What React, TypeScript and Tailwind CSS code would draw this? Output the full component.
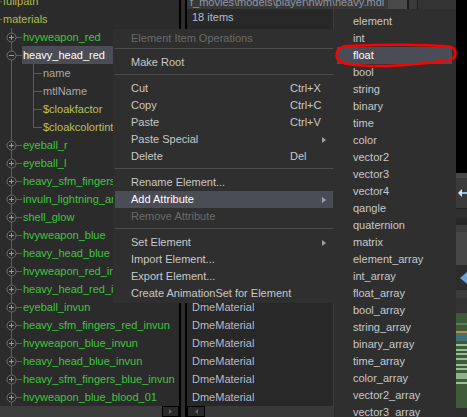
import React from 'react';

type Row = { t: string; lvl: 0 | 1 | 2; c: string; icon?: 'plus' | 'minus'; sel?: boolean; last?: boolean };

const G = 'text-[#3fc63f]';
const O = 'text-[#b3bd47]';
const Y = 'text-[#bcc255]';
const N = 'text-[#a9a9a9]';

const rows: Row[] = [
  { t: 'fullpath', lvl: 0, c: O },
  { t: 'materials', lvl: 0, c: O },
  { t: 'hvyweapon_red', lvl: 1, c: G, icon: 'plus' },
  { t: 'heavy_head_red', lvl: 1, c: 'text-white', icon: 'minus', sel: true },
  { t: 'name', lvl: 2, c: N },
  { t: 'mtlName', lvl: 2, c: N },
  { t: '$cloakfactor', lvl: 2, c: Y },
  { t: '$cloakcolortint', lvl: 2, c: Y, last: true },
  { t: 'eyeball_r', lvl: 1, c: G, icon: 'plus' },
  { t: 'eyeball_l', lvl: 1, c: G, icon: 'plus' },
  { t: 'heavy_sfm_fingers_red', lvl: 1, c: G, icon: 'plus' },
  { t: 'invuln_lightning_armor', lvl: 1, c: G, icon: 'plus' },
  { t: 'shell_glow', lvl: 1, c: G, icon: 'plus' },
  { t: 'hvyweapon_blue', lvl: 1, c: G, icon: 'plus' },
  { t: 'heavy_head_blue', lvl: 1, c: G, icon: 'plus' },
  { t: 'hvyweapon_red_invun', lvl: 1, c: G, icon: 'plus' },
  { t: 'heavy_head_red_invun', lvl: 1, c: G, icon: 'plus' },
  { t: 'eyeball_invun', lvl: 1, c: G, icon: 'plus' },
  { t: 'heavy_sfm_fingers_red_invun', lvl: 1, c: G, icon: 'plus' },
  { t: 'hvyweapon_blue_invun', lvl: 1, c: G, icon: 'plus' },
  { t: 'heavy_head_blue_invun', lvl: 1, c: G, icon: 'plus' },
  { t: 'heavy_sfm_fingers_blue_invun', lvl: 1, c: G, icon: 'plus' },
  { t: 'hvyweapon_blue_blood_01', lvl: 1, c: G, icon: 'plus' },
];

const LINE = '#5c5c5c';

function Connector({ r }: { r: Row }) {
  if (r.lvl === 0) {
    return (
      <svg width="2" height="18" className="shrink-0">
        <line x1="0" y1="9.5" x2="2" y2="9.5" stroke={LINE} />
      </svg>
    );
  }
  if (r.lvl === 1) {
    return (
      <svg width="22" height="18" className="shrink-0">
        <line x1="11.5" y1="0" x2="11.5" y2="18" stroke={LINE} />
        <line x1="16" y1="9.5" x2="22" y2="9.5" stroke={LINE} />
        <circle cx="11.5" cy="9.5" r="4.5" fill="#2b2b2b" stroke="#707070" />
        <line x1="9" y1="9.5" x2="14" y2="9.5" stroke="#9a9a9a" />
        {r.icon === 'plus' && <line x1="11.5" y1="7" x2="11.5" y2="12" stroke="#9a9a9a" />}
      </svg>
    );
  }
  return (
    <svg width="42" height="18" className="shrink-0">
      <line x1="11.5" y1="0" x2="11.5" y2="18" stroke={LINE} />
      <line x1="33.5" y1="0" x2="33.5" y2={r.last ? 9.5 : 18} stroke={LINE} />
      <line x1="33.5" y1="9.5" x2="42" y2="9.5" stroke={LINE} />
    </svg>
  );
}

type MI = { t: string; k?: string; sub?: boolean; dis?: boolean; hl?: boolean; head?: boolean } | 'sep' | 'sep1';

const menu: MI[] = [
  { t: 'Element Item Operations', dis: true, head: true },
  'sep1',
  { t: 'Make Root' },
  'sep',
  { t: 'Cut', k: 'Ctrl+X' },
  { t: 'Copy', k: 'Ctrl+C' },
  { t: 'Paste', k: 'Ctrl+V' },
  { t: 'Paste Special', sub: true },
  { t: 'Delete', k: 'Del' },
  'sep',
  { t: 'Rename Element...' },
  { t: 'Add Attribute', sub: true, hl: true },
  { t: 'Remove Attribute', dis: true },
  'sep',
  { t: 'Set Element', sub: true },
  { t: 'Import Element...' },
  { t: 'Export Element...' },
  { t: 'Create AnimationSet for Element' },
];

const subItems = [
  'element', 'int', 'float', 'bool', 'string', 'binary', 'time', 'color', 'vector2', 'vector3', 'vector4',
  'qangle', 'quaternion', 'matrix', 'element_array', 'int_array', 'float_array', 'bool_array', 'string_array',
  'binary_array', 'time_array', 'color_array', 'vector2_array', 'vector3_array', 'vector4_array',
];

function Arrow() {
  return (
    <svg width="4" height="6" className="shrink-0">
      <path d="M0 0 L4 3 L0 6 Z" fill="#a0a0a0" />
    </svg>
  );
}

export default function App() {
  const list = Array.from({ length: 21 }, (_, i) => i);
  return (
    <div className="relative w-[467px] h-[417px] overflow-hidden bg-[#2b2b2b] flex font-['Liberation_Sans',Arial,sans-serif] text-[11px] select-none">
      {/* Left tree panel */}
      <div className="w-[179px] shrink-0 flex flex-col">
        <div className="flex-1 overflow-hidden">
          <div className="-mt-[8px]">
            {rows.map((r, i) => (
              <div key={i} className="flex h-[18px] whitespace-nowrap">
                <Connector r={r} />
                <span className={`flex-1 pl-[1px] leading-[18px] ${r.c} ${r.sel ? 'bg-[#4a4d56]' : ''}`}>{r.t}</span>
              </div>
            ))}
          </div>
        </div>
        <div className="h-[11px] flex">
          <div className="flex-1 bg-[#3c3c3c]" />
          <div className="w-[17px] border border-black bg-[#2a2a2a] flex items-center justify-center">
            <svg width="3" height="5"><path d="M0 0 L3 2.5 L0 5 Z" fill="#666" /></svg>
          </div>
        </div>
      </div>

      {/* splitter */}
      <div className="w-[8px] shrink-0 bg-[#2e2e2e] border-l-[2px] border-r-[2px] border-black" />

      {/* middle + right */}
      <div className="w-[269px] shrink-0 flex flex-col">
        <div className="h-[9px] flex shrink-0 overflow-hidden">
          <div className="w-[201px] bg-[#393939] pl-[3px] overflow-hidden whitespace-nowrap">
            <div className="-mt-[3px] leading-[11px] text-[#8f96a3]">f_movies\models\player\hwm\heavy.mdl</div>
          </div>
          <div className="w-[19px] bg-[#4a4a4a]" />
          <div className="w-[2px] bg-[#1c1c1c]" />
          <div className="w-[8px] bg-[#3a3a3a]" />
          <div className="w-[1px] bg-[#1c1c1c]" />
          <div className="flex-1 bg-[#333333]" />
        </div>
        <div className="flex-1 flex">
          <div className="w-[147px] shrink-0 bg-[#282828] flex flex-col border-r border-[#3c3c3c]">
            <div className="h-[19px] pl-[5px] leading-[17px] text-[#b4bccb]">18 items</div>
            <div className="flex-1 overflow-hidden">
              {list.map((i) => (
                <div key={i} className="h-[18px] pl-[5px] leading-[18px] text-[#b4bccb]">DmeMaterial</div>
              ))}
            </div>
            <div className="h-[11px] flex shrink-0">
              <div className="w-[18px] border border-black bg-[#2a2a2a] flex items-center justify-center">
                <svg width="3" height="5"><path d="M3 0 L0 2.5 L3 5 Z" fill="#666" /></svg>
              </div>
              <div className="flex-1 bg-[#393939]" />
            </div>
          </div>
          <div className="flex-1 bg-[#2e2e2e]" />
        </div>
      </div>

      {/* right strip */}
      <div className="w-[11px] shrink-0 flex flex-col">
        <div className="h-[173px] bg-black" />
        <div className="h-[5px] bg-[#474747]" />
        <div className="h-[30px] bg-[#3a3a3a] flex items-center justify-end">
          <svg width="9" height="10">
            <path d="M0 5 L4 1 L4 9 Z" fill="#cfe3f5" />
            <line x1="4" y1="5" x2="9" y2="5" stroke="#8fc0ea" strokeWidth="2" />
          </svg>
        </div>
        <div className="h-[10px] bg-[#2f2f2f] border-t border-[#222]" />
        <div className="h-[7px] bg-[#282828]" />
        <div className="h-[7px] bg-[#3d3d3d]" />
        <div className="h-[33px] bg-[#474747]" />
        <div className="h-[25px] bg-[#2c2c2c] flex items-center justify-end">
          <svg width="7" height="12"><path d="M7 0 L0 6 L7 12 Z" fill="#6f9fcf" /></svg>
        </div>
        <div className="h-[8px] bg-[#3b3b3b]" />
        <div className="h-[15px] bg-[#333333]" />
        <div className="h-[95px] bg-[#3e5a39] flex flex-col">
          <div className="h-[10px]" />
          <div className="h-[2px] bg-[#5d7c58]" />
          <div className="h-[6px]" />
          <div className="h-[2px] bg-[#c08a4a]" />
          <div className="h-[8px] bg-[#3f7176]" />
          <div className="h-[3px]" />
          <div className="h-[2px] bg-[#9fbf98]" />
          <div className="h-[3px]" />
          <div className="h-[2px] bg-[#9fbf98]" />
          <div className="h-[2px]" />
          <div className="h-[2px] bg-[#9fbf98]" />
          <div className="h-[3px]" />
          <div className="h-[2px] bg-[#9fbf98]" />
          <div className="h-[4px]" />
          <div className="h-[2px] bg-[#9fbf98]" />
          <div className="h-[2px]" />
          <div className="h-[2px] bg-[#9fbf98]" />
          <div className="h-[3px]" />
          <div className="h-[6px] bg-[#8fb088]" />
          <div className="h-[3px]" />
          <div className="h-[2px] bg-[#9fbf98]" />
        </div>
        <div className="flex-1 bg-[#2e2e2e]" />
      </div>

      {/* context menu */}
      <div className="absolute left-[113px] top-[29px] w-[222px] bg-[#2f2f2f] pt-[1px] pb-[1px]">
        {menu.map((m, i) => {
          if (m === 'sep' || m === 'sep1') {
            return <div key={i} className={`h-[1px] mx-[2px] bg-[#4d4d4d] mb-[5px] ${m === 'sep1' ? 'mt-[2px]' : 'mt-[3px]'}`} />;
          }
          return (
            <div
              key={i}
              className={`flex items-center mx-[2px] pl-[16px] whitespace-nowrap ${m.head ? 'h-[16px]' : 'h-[17px]'} ${m.hl ? 'bg-[#4a4d56] text-white' : m.dis ? 'text-[#6b6b6b]' : 'text-[#c8c8c8]'}`}
            >
              <span className="w-[159px]">{m.t}</span>
              <span className="flex-1 flex items-center">
                {m.k && <span>{m.k}</span>}
                {m.sub && <span className="ml-[32px] flex"><Arrow /></span>}
              </span>
            </div>
          );
        })}
      </div>

      {/* submenu */}
      <div className="absolute left-[335px] top-[10px] w-[121px] h-[420px] bg-[#2f2f2f] pt-[3px]">
        {subItems.map((s) => (
          <div
            key={s}
            className={`h-[17px] leading-[17px] ml-[2px] mr-[4px] pl-[16px] whitespace-nowrap ${s === 'float' ? 'bg-[#4a4d56] text-white' : 'text-[#c6c8cc]'}`}
          >
            {s}
          </div>
        ))}
      </div>

      {/* red annotation */}
      <svg className="absolute left-0 top-0 pointer-events-none" width="467" height="417">
        <path
          d="M346 46 C385 44.5 425 44.5 449 46.5 C457 48 458 57 450 60 C425 63.5 395 66.5 372 66 C355 65.5 341 64.5 337.5 59 C335 53 338 47 346 46 Z"
          fill="none"
          stroke="#ff0000"
          strokeWidth="2.5"
        />
      </svg>
    </div>
  );
}
